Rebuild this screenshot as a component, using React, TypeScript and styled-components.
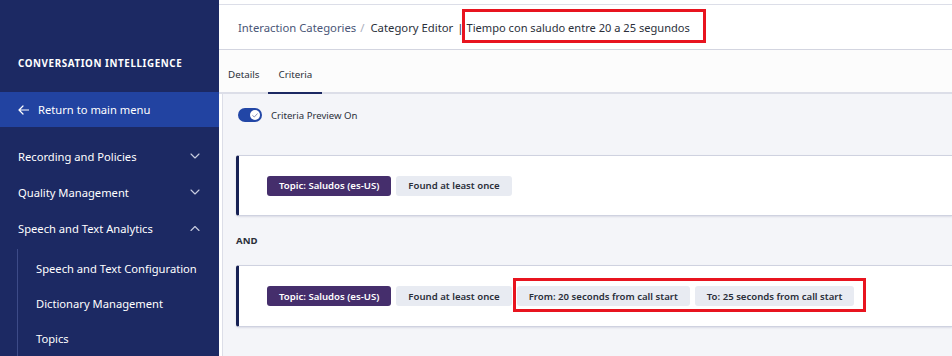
import React from "react";
import styled, { createGlobalStyle } from "styled-components";

const Global = createGlobalStyle`
  html, body { margin: 0; padding: 0; }
  body { font-family: "Noto Sans", "Open Sans", Arial, sans-serif; background: #fff; }
  * { box-sizing: border-box; }
`;

const Page = styled.div`
  display: flex;
  width: 952px;
  height: 356px;
  overflow: hidden;
`;

const Sidebar = styled.nav`
  width: 219px;
  flex: none;
  background: #1c2963;
  color: #fff;
  display: flex;
  flex-direction: column;
`;

const Product = styled.div`
  height: 93px;
  padding: 57px 0 0 18px;
  font-size: 9.8px;
  font-weight: 700;
  letter-spacing: 0.6px;
  text-transform: uppercase;
`;

const ReturnLink = styled.div`
  height: 37px;
  background: #2243a1;
  display: flex;
  align-items: center;
  gap: 9px;
  padding: 1px 0 0 18px;
  font-size: 11.2px;
`;

const MenuList = styled.div`
  padding-top: 11px;
  display: flex;
  flex-direction: column;
`;

const MenuItem = styled.div`
  height: 36px;
  display: flex;
  align-items: center;
  justify-content: space-between;
  padding: 0 19px 0 18px;
  font-size: 11.2px;
`;

const SubMenu = styled.div`
  margin-left: 17px;
  margin-top: 3px;
  border-left: 1px solid #3d4b88;
  display: flex;
  flex-direction: column;
  padding-top: 2px;
`;

const SubItem = styled.div`
  height: 35px;
  display: flex;
  align-items: center;
  padding-left: 18px;
  font-size: 11.2px;
`;

const Main = styled.main`
  flex: 1;
  display: flex;
  flex-direction: column;
  min-width: 0;
`;

const TopStrip = styled.div`
  height: 5px;
  border-bottom: 1px solid #dcdee8;
  flex: none;
`;

const Header = styled.header`
  height: 45px;
  flex: none;
  border-bottom: 1px solid #d3d5e0;
  display: flex;
  align-items: center;
  padding-left: 19px;
  font-size: 11.3px;
  color: #2b2f3a;
`;

const Crumb = styled.span`
  color: #4a5677;
`;

const Sep = styled.span<{ $light?: boolean }>`
  color: ${(p) => (p.$light ? "#a9aebd" : "#2b2f3a")};
  margin: 0 ${(p) => (p.$light ? 6 : 3)}px 0 4px;
`;

const Annotated = styled.span<{ $l: number; $r: number; $t: number; $b: number }>`
  position: relative;
  display: inline-flex;
  gap: 5px;
  &::after {
    content: "";
    position: absolute;
    left: ${(p) => p.$l}px;
    right: ${(p) => p.$r}px;
    top: ${(p) => p.$t}px;
    bottom: ${(p) => p.$b}px;
    border: 3px solid #e8141f;
    pointer-events: none;
  }
`;

const Title = styled.span`
  font-size: 11.1px;
`;

const Tabs = styled.div`
  height: 44px;
  flex: none;
  background: #fcfcfc;
  border-bottom: 2px solid #dcdee8;
  display: flex;
  align-items: stretch;
  padding-left: 3px;
`;

const Tab = styled.div<{ $active?: boolean }>`
  display: flex;
  align-items: center;
  padding: 6px ${(p) => (p.$active ? 10 : 9)}px 0 ${(p) => (p.$active ? 10 : 6)}px;
  font-size: 9.8px;
  color: #2b2f3a;
  border-bottom: 2px solid ${(p) => (p.$active ? "#1c2963" : "transparent")};
  margin-bottom: -2px;
`;

const Content = styled.section`
  flex: 1;
  background: #f4f5f9;
  border-left: 1px solid #dcdee8;
  margin-left: 3px;
  padding: 14px 0 0 13px;
  display: flex;
  flex-direction: column;
`;

const ToggleRow = styled.div`
  display: flex;
  align-items: center;
  gap: 9px;
  padding-left: 2px;
  height: 14px;
  font-size: 9.6px;
  color: #2b2f3a;
`;

const Track = styled.span`
  width: 24px;
  height: 14px;
  border-radius: 7px;
  background: #2246a6;
  position: relative;
  display: inline-block;
`;

const Knob = styled.span`
  position: absolute;
  right: 2px;
  top: 2px;
  width: 10px;
  height: 10px;
  border-radius: 50%;
  background: #fff;
  display: flex;
  align-items: center;
  justify-content: center;
`;

const Card = styled.div<{ $mt: number; $h: number }>`
  margin-top: ${(p) => p.$mt}px;
  height: ${(p) => p.$h}px;
  background: #fff;
  border: 1px solid #cfd2e0;
  border-left: 3px solid #172154;
  border-right: none;
  border-radius: 3px 0 0 3px;
  box-shadow: 0 1px 2px rgba(30, 40, 90, 0.12);
  display: flex;
  align-items: center;
  gap: 5px;
  padding-left: 28px;
`;

const Chip = styled.span<{ $topic?: boolean }>`
  height: 20px;
  display: inline-flex;
  align-items: center;
  padding: 0 12px;
  border-radius: 3px;
  font-size: 9.6px;
  font-weight: 600;
  white-space: nowrap;
  background: ${(p) => (p.$topic ? "#452e6c" : "#e8ebf2")};
  color: ${(p) => (p.$topic ? "#fff" : "#2b2f3a")};
`;

const AndLabel = styled.div`
  margin-top: 20px;
  font-size: 9.6px;
  font-weight: 700;
  color: #2b2f3a;
  height: 10px;
  line-height: 10px;
`;

const Chevron = ({ up }: { up?: boolean }) => (
  <svg width="10" height="6" viewBox="0 0 10 6" fill="none">
    <path
      d={up ? "M1 5.5 L5 1.5 L9 5.5" : "M1 1 L5 5 L9 1"}
      stroke="#c9cde0"
      strokeWidth="1.1"
      strokeLinecap="round"
      strokeLinejoin="round"
    />
  </svg>
);

const ArrowLeft = () => (
  <svg width="11" height="10" viewBox="0 0 11 10" fill="none">
    <path d="M10.5 5 H1 M5 1 L1 5 L5 9" stroke="#fff" strokeWidth="1.2" strokeLinecap="round" strokeLinejoin="round" />
  </svg>
);

export default function App() {
  return (
    <>
      <Global />
      <Page>
        <Sidebar>
          <Product>Conversation Intelligence</Product>
          <ReturnLink>
            <ArrowLeft />
            Return to main menu
          </ReturnLink>
          <MenuList>
            <MenuItem>
              Recording and Policies
              <Chevron />
            </MenuItem>
            <MenuItem>
              Quality Management
              <Chevron />
            </MenuItem>
            <MenuItem>
              Speech and Text Analytics
              <Chevron up />
            </MenuItem>
            <SubMenu>
              <SubItem>Speech and Text Configuration</SubItem>
              <SubItem>Dictionary Management</SubItem>
              <SubItem>Topics</SubItem>
            </SubMenu>
          </MenuList>
        </Sidebar>
        <Main>
          <TopStrip />
          <Header>
            <Crumb>Interaction Categories</Crumb>
            <Sep $light>/</Sep>
            <span>Category Editor</span>
            <Sep>|</Sep>
            <Annotated $l={-5} $r={-16} $t={-11} $b={-8}>
              <Title>Tiempo con saludo entre 20 a 25 segundos</Title>
            </Annotated>
          </Header>
          <Tabs>
            <Tab>Details</Tab>
            <Tab $active>Criteria</Tab>
          </Tabs>
          <Content>
            <ToggleRow>
              <Track>
                <Knob>
                  <svg width="6" height="5" viewBox="0 0 6 5" fill="none">
                    <path d="M0.7 2.6 L2.3 4 L5.3 0.8" stroke="#8a93b8" strokeWidth="1" strokeLinecap="round" strokeLinejoin="round" />
                  </svg>
                </Knob>
              </Track>
              Criteria Preview On
            </ToggleRow>
            <Card $mt={33} $h={61}>
              <Chip $topic>Topic: Saludos (es-US)</Chip>
              <Chip>Found at least once</Chip>
            </Card>
            <AndLabel>AND</AndLabel>
            <Card $mt={19} $h={62}>
              <Chip $topic>Topic: Saludos (es-US)</Chip>
              <Chip>Found at least once</Chip>
              <Annotated $l={-4} $r={-12} $t={-8} $b={-6}>
                <Chip>From: 20 seconds from call start</Chip>
                <Chip>To: 25 seconds from call start</Chip>
              </Annotated>
            </Card>
          </Content>
        </Main>
      </Page>
    </>
  );
}
